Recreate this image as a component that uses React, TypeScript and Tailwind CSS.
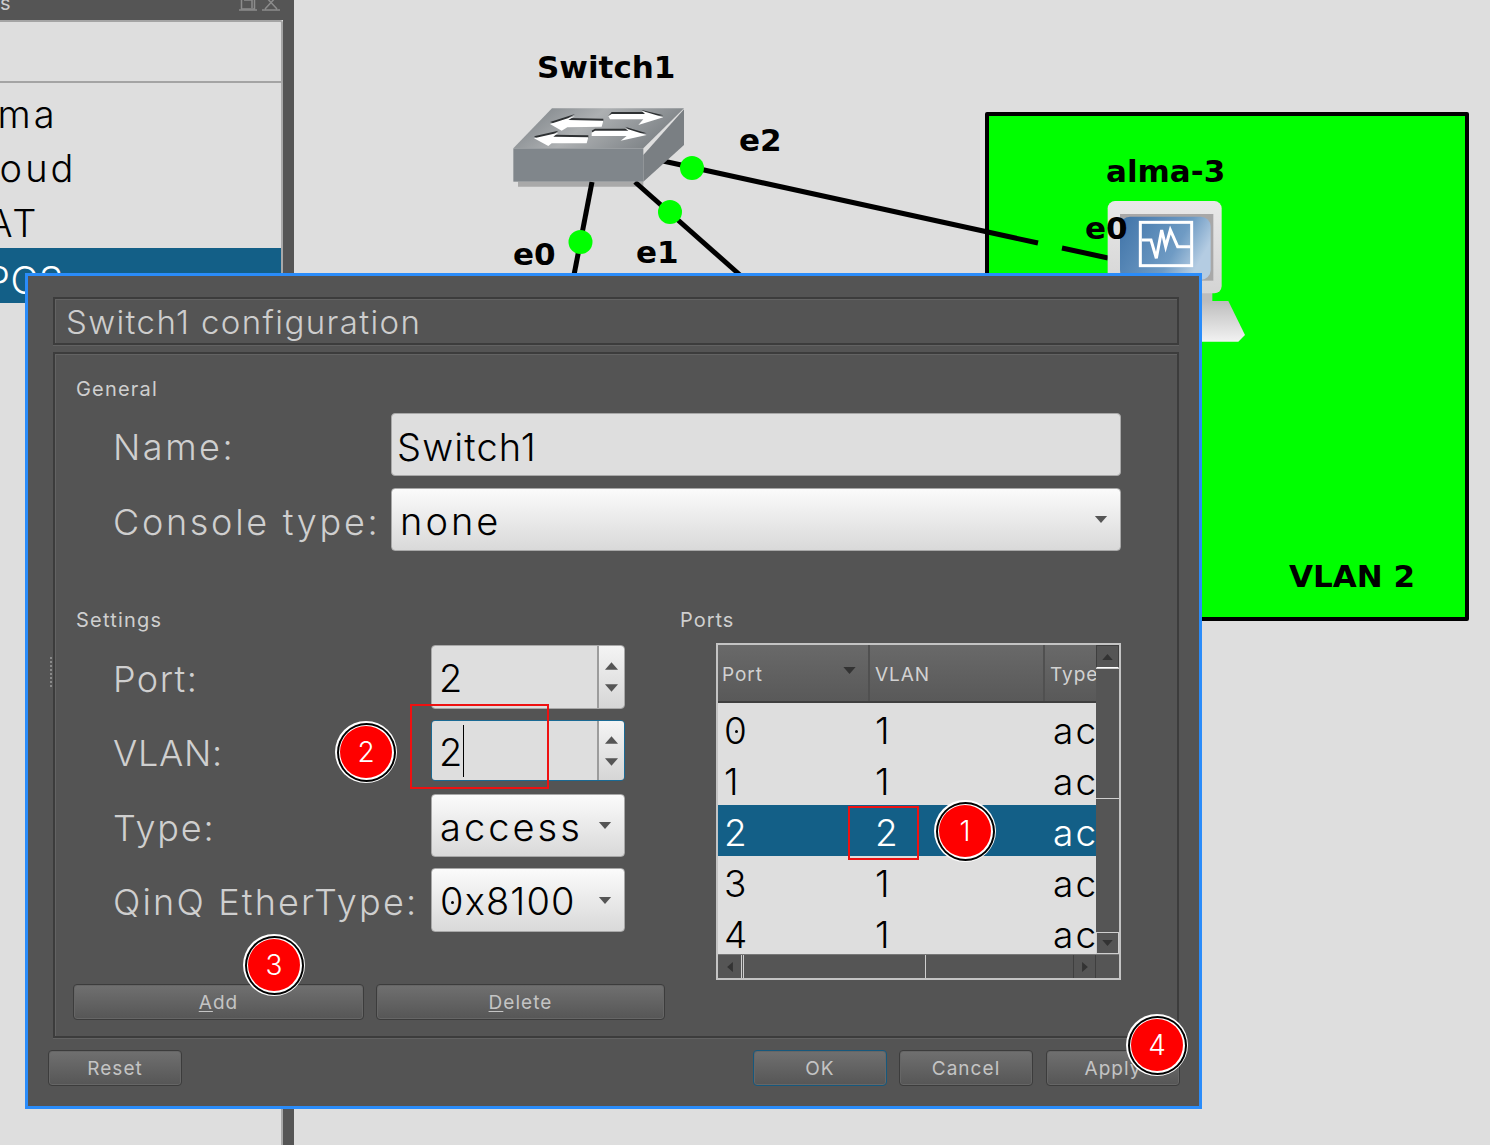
import React from "react";

const Tri = ({ dir, className }: { dir: "up" | "down" | "left" | "right"; className: string }) => {
  const pts = { up: "0,8 7,0 14,8", down: "0,0 14,0 7,8", left: "8,0 8,14 0,7", right: "0,0 0,14 8,7" }[dir];
  const vb = dir === "up" || dir === "down" ? "0 0 14 8" : "0 0 8 14";
  return (
    <svg viewBox={vb} className={className}>
      <polygon points={pts} fill="currentColor" />
    </svg>
  );
};

const Badge = ({ n, className }: { n: string; className: string }) => (
  <div className={`absolute z-30 w-[62px] h-[62px] rounded-full bg-white flex items-center justify-center ${className}`}>
    <div className="w-[59px] h-[59px] rounded-full bg-black flex items-center justify-center">
      <div className="w-[55px] h-[55px] rounded-full bg-white flex items-center justify-center">
        <div className="w-[52px] h-[52px] rounded-full bg-[#ff0000] flex items-center justify-center text-white text-[28px] font-light tracking-normal">
          {n}
        </div>
      </div>
    </div>
  </div>
);

const Field = ({ label, w = "w-[277px]", tr = "tracking-[0.07em]" }: { label: string; w?: string; tr?: string }) => (
  <div className={`${w} shrink-0 pt-[4px] -ml-[1px] mr-[1px] text-[36px] font-light ${tr} text-[#cfcfcf] leading-none whitespace-nowrap`}>
    {label}
  </div>
);

const Btn = ({ children, className = "" }: { children: React.ReactNode; className?: string }) => (
  <div
    className={`h-[36px] pt-[2px] rounded-[4px] border border-[#3c3c3c] bg-gradient-to-b from-[#707070] to-[#565656] shadow-[inset_0_0_0_1px_#666] flex items-center justify-center text-[19px] tracking-[0.055em] text-[#c4c4c4] ${className}`}
  >
    {children}
  </div>
);

const Spin = ({ value, focus, h }: { value: string; focus?: boolean; h: string }) => (
  <div
    className={`w-[194px] ${h} rounded-[4px] border flex overflow-hidden ${focus ? "border-[#1a6a94]" : "border-[#a8a8a8]"}`}
  >
    <div className="flex-1 bg-[#dedede] text-black text-[38px] font-light pl-[7px] flex items-center pt-[2px] border-r-2 border-[#9c9c9c] leading-none">
      {value}
      {focus && <span className="w-px h-[52px] bg-black ml-px -mt-[2px]" />}
    </div>
    <div className="w-[25px] bg-gradient-to-b from-[#f4f4f4] to-[#d6d6d6] flex flex-col items-center justify-center gap-[14px] text-[#555]">
      <Tri dir="up" className="w-[13px] h-[8px]" />
      <Tri dir="down" className="w-[13px] h-[8px]" />
    </div>
  </div>
);

const Combo = ({ children, h, width }: { children: React.ReactNode; h: string; width: string }) => (
  <div
    className={`${width} ${h} rounded-[4px] border border-[#a8a8a8] bg-gradient-to-b from-[#fbfbfb] to-[#d9d9d9] flex items-center justify-between pl-[8px] pr-[12px] text-black text-[38px] font-light tracking-[0.08em] leading-none`}
  >
    <span className="pt-[2px]">{children}</span>
    <Tri dir="down" className="w-[14px] h-[7px] text-[#555]" />
  </div>
);

const Zero = () => (
  <span className="relative inline-block">
    0
    <span className="absolute left-[11px] top-1/2 w-[3px] h-[3px] rounded-full bg-current" />
  </span>
);

const rows: [React.ReactNode, string][] = [
  [<Zero />, "1"],
  ["1", "1"],
  ["2", "2"],
  ["3", "1"],
  ["4", "1"],
];

const sunken = "border-2 border-[#3c3c3c] shadow-[inset_1px_1px_0_#636363,0_1px_0_#626262]";

export default function App() {
  return (
    <div className="relative w-[1490px] h-[1145px] overflow-hidden bg-[#dedede] font-['Inter','Liberation_Sans',sans-serif]">
      {/* Left dock */}
      <div className="absolute left-0 top-0 w-[294px] h-[1145px] flex">
        <div className="w-[283px] flex flex-col">
          <div className="h-[20px] bg-[#555] flex items-start justify-between pr-[3px] overflow-hidden shrink-0">
            <span className="text-[#ccc] text-[20px] leading-none -mt-[7px] tracking-wide">s</span>
            <div className="flex gap-[5px] -mt-[5px] text-[#8c8c8c]">
              <svg viewBox="0 0 18 17" className="w-[18px] h-[17px]" fill="none" stroke="currentColor" strokeWidth="1.5">
                <rect x="2.5" y="1" width="13" height="13" />
                <path d="M0 15h18M5 5h8v8" />
              </svg>
              <svg viewBox="0 0 18 17" className="w-[18px] h-[17px]" fill="none" stroke="currentColor" strokeWidth="1.5">
                <path d="M3 1l12 13M15 1L3 14M0 15h18" />
              </svg>
            </div>
          </div>
          <div className="h-[63px] bg-[#dedede] border-r-2 border-t-2 border-b-2 border-[#a4a4a4] rounded-tr-[3px] shrink-0" />
          <div className="h-[220px] bg-[#dedede] border-r-2 border-[#a8a8a8] text-black text-[38px] font-light tracking-[0.08em] leading-none overflow-hidden">
            <div className="h-[54px] flex items-center -ml-[43px] pt-[8px] whitespace-nowrap">Alma</div>
            <div className="h-[54px] flex items-center -ml-[43px] pt-[8px] whitespace-nowrap">Cloud</div>
            <div className="h-[54px] flex items-center -ml-[45px] pt-[10px] whitespace-nowrap">NAT</div>
            <div className="h-[55px] mt-[3px] flex items-center -ml-[15px] bg-[#135f87] text-white pl-[1px] pt-[8px] tracking-[0.02em] whitespace-nowrap">PCS</div>
          </div>
          <div className="flex-1 border-r-2 border-[#a8a8a8]" />
        </div>
        <div className="w-[11px] bg-[#555]" />
      </div>

      {/* Canvas */}
      <div className="absolute left-[985px] top-[112px] w-[484px] h-[509px] bg-[#00ff00] border-[4px] border-black rounded-[2px]" />
      <svg className="absolute left-0 top-0" width="1490" height="1145" viewBox="0 0 1490 1145">
        <defs>
          <linearGradient id="top" x1="0" y1="0" x2="1" y2="0.3">
            <stop offset="0" stopColor="#767c81" />
            <stop offset="0.5" stopColor="#adb0b2" />
            <stop offset="1" stopColor="#7e8387" />
          </linearGradient>
          <linearGradient id="screen" x1="0" y1="0" x2="1" y2="0.4">
            <stop offset="0" stopColor="#3f73a8" />
            <stop offset="0.7" stopColor="#6f9bc4" />
            <stop offset="1" stopColor="#b4cce2" />
          </linearGradient>
          <linearGradient id="base" x1="0" y1="0" x2="0" y2="1">
            <stop offset="0" stopColor="#bdbdbd" />
            <stop offset="1" stopColor="#f2f2f2" />
          </linearGradient>
          <linearGradient id="mon" x1="0" y1="0" x2="0" y2="1">
            <stop offset="0" stopColor="#e8e8e8" />
            <stop offset="1" stopColor="#d4d4d4" />
          </linearGradient>
        </defs>
        <polygon transform="translate(490 30) scale(0.33333)" points="84,455 460,455 460,470 84,470" fill="#a9a9a9" />
        <g stroke="#000" strokeWidth="5" fill="none">
          <path d="M592 182L574 275" />
          <path d="M635 182L740 275" />
          <path d="M663 161L1038 243" />
          <path d="M1062 248L1108 258" />
        </g>
        <g transform="translate(490 30) scale(0.33333)">
          <polygon points="460,375 582,238 582,345 460,455" fill="#7a7f83" />
          <polygon points="70,355 186,235 582,235 460,355" fill="url(#top)" />
          <rect x="70" y="355" width="390" height="100" fill="#80868b" />
          <g fill="#2e3133">
            <polygon points="180,276 255,252 235,264 340,266 340,274 190,280" />
            <polygon points="355,258 365,246 465,246 455,240 520,256 460,262" />
            <polygon points="132,319 205,302 190,314 295,316 295,324 140,324" />
            <polygon points="305,302 315,296 415,296 405,290 470,310 310,312" />
          </g>
          <g fill="#fff">
            <polygon points="180,282 255,258 235,270 340,272 335,290 232,292 215,302" />
            <polygon points="355,258 365,252 465,252 455,242 520,262 445,285 460,268 360,268" />
            <polygon points="132,325 205,308 190,320 295,322 290,340 185,340 175,348" />
            <polygon points="305,308 315,302 415,302 405,295 470,315 392,332 410,318 305,318" />
          </g>
        </g>
        <circle cx="692" cy="168" r="12" fill="#00ff00" />
        <circle cx="670" cy="212" r="12" fill="#00ff00" />
        <circle cx="580.5" cy="242" r="12" fill="#00ff00" />
        <g transform="translate(980 100) scale(0.33333)">
          <rect x="665" y="575" width="32" height="35" fill="#bdbdbd" />
          <polygon points="600,603 745,603 795,705 775,725 600,725" fill="url(#base)" />
          <rect x="383" y="303" width="342" height="277" rx="22" fill="url(#mon)" />
          <rect x="420" y="342" width="280" height="200" fill="#a8a8a8" />
          <rect x="420" y="350" width="272" height="190" rx="30" fill="url(#screen)" />
          <rect x="481" y="367" width="154" height="130" fill="none" stroke="#fff" strokeWidth="9" />
          <path d="M485 420h28l16 55 16-85 12 50 14-50 22 50h38" fill="none" stroke="#fff" strokeWidth="9" />
        </g>
      </svg>
      <div className="absolute left-0 top-0 text-black font-bold font-['DejaVu_Sans',sans-serif] text-[31px] leading-none">
        <span className="absolute left-[537px] top-[52px]">Switch1</span>
        <span className="absolute left-[739px] top-[125px]">e2</span>
        <span className="absolute left-[513px] top-[239px]">e0</span>
        <span className="absolute left-[636px] top-[237px]">e1</span>
        <span className="absolute left-[1106px] top-[156px] whitespace-nowrap">alma-3</span>
        <span className="absolute left-[1085px] top-[213px]">e0</span>
        <span className="absolute left-[1289px] top-[561px] whitespace-nowrap">VLAN 2</span>
      </div>

      {/* Dialog */}
      <div className="absolute left-[25px] top-[273px] w-[1177px] h-[836px] border-[3px] border-[#2a8cfa] bg-[#545454] pl-[20px] pr-[20px] pt-[21px] flex flex-col">
        <div className={`ml-[5px] h-[48px] shrink-0 ${sunken} flex items-center pl-[11px] pt-[4px] text-[33px] font-light tracking-[0.042em] text-[#cdcdcd] whitespace-nowrap`}>
          Switch1 configuration
        </div>
        <div className={`ml-[5px] mt-[7px] h-[686px] shrink-0 ${sunken} pl-[21px] pt-[22px] text-[#cfcfcf]`}>
          <div className="h-[24px] pt-[2px] flex items-center text-[20px] tracking-[0.06em]">General</div>
          <div className="ml-[38px] mt-[13px] flex flex-col gap-[12px]">
            <div className="flex items-center">
              <Field label="Name:" />
              <div className="w-[730px] h-[63px] rounded-[4px] border border-[#a8a8a8] bg-[#dedede] flex items-center pl-[5px] pt-[4px] text-black text-[38px] font-light tracking-[0.03em] leading-none">
                Switch1
              </div>
            </div>
            <div className="flex items-center">
              <Field label="Console type:" tr="tracking-[0.075em]" />
              <Combo h="h-[63px]" width="w-[730px]">none</Combo>
            </div>
          </div>
          <div className="mt-[56px] flex gap-[15px]">
            <div className="w-[589px] shrink-0">
              <div className="h-[24px] pt-[2px] flex items-center text-[20px] tracking-[0.06em]">Settings</div>
              <div className="ml-[38px] mt-[14px] flex flex-col">
                <div className="flex items-center">
                  <Field label="Port:" w="w-[317px]" tr="tracking-[0.04em]" />
                  <Spin value="2" h="h-[64px]" />
                </div>
                <div className="flex items-center mt-[11px]">
                  <Field label="VLAN:" w="w-[317px]" tr="tracking-[0.02em]" />
                  <Spin value="2" focus h="h-[61px]" />
                </div>
                <div className="flex items-center mt-[13px]">
                  <Field label="Type:" w="w-[317px]" tr="tracking-[0.05em]" />
                  <Combo h="h-[63px]" width="w-[194px]">access</Combo>
                </div>
                <div className="flex items-center mt-[11px]">
                  <Field label="QinQ EtherType:" w="w-[317px]" tr="tracking-[0.06em]" />
                  <Combo h="h-[64px]" width="w-[194px]">
                    <span className="tracking-[0.03em]">
                      <Zero />x8100
                    </span>
                  </Combo>
                </div>
              </div>
              <div className="-ml-[3px] mt-[52px] flex gap-[12px]">
                <Btn className="w-[291px]">
                  <span><u className="underline-offset-2">A</u>dd</span>
                </Btn>
                <Btn className="w-[289px]">
                  <span><u className="underline-offset-2">D</u>elete</span>
                </Btn>
              </div>
            </div>
            <div>
              <div className="h-[24px] pt-[2px] flex items-center text-[20px] tracking-[0.05em]">Ports</div>
              <div className="ml-[36px] mt-[12px] w-[405px] h-[337px] border-2 border-[#c4c4c4] flex flex-col bg-[#555]">
                <div className="flex h-[309px]">
                  <div className="w-[378px] flex flex-col overflow-hidden">
                    <div className="h-[58px] shrink-0 flex bg-gradient-to-b from-[#696969] to-[#595959] border-b-2 border-[#3f3f3f] text-[19px] text-[#d2d2d2] tracking-[0.05em]">
                      <div className="w-[152px] shrink-0 flex items-center justify-between pl-[4px] pr-[12px] pt-[4px] border-r-2 border-[#505050]">
                        <span>Port</span>
                        <Tri dir="down" className="w-[13px] h-[7px] -mt-[9px] text-[#333]" />
                      </div>
                      <div className="w-[175px] shrink-0 flex items-center pl-[5px] pt-[4px] border-r-2 border-[#505050]">VLAN</div>
                      <div className="flex-1 flex items-center pl-[5px] pt-[4px] whitespace-nowrap">Type</div>
                    </div>
                    <div className="flex-1 bg-[#dedede] text-[37px] font-light text-black leading-none overflow-hidden">
                      {rows.map(([p, v], i) => (
                        <div
                          key={i}
                          className={`h-[51px] pt-[3px] flex items-center ${i === 2 ? "bg-[#135f87] text-white" : ""}`}
                        >
                          <div className="w-[157px] shrink-0 pl-[6px]">{p}</div>
                          <div className="w-[178px] shrink-0">{v}</div>
                          <div className="tracking-[0.06em]">access</div>
                        </div>
                      ))}
                    </div>
                  </div>
                  <div className="flex-1 bg-[#555] flex flex-col">
                    <div className="h-[23px] border border-[#3f3f3f] border-b-white flex items-center justify-center text-[#333]">
                      <Tri dir="up" className="w-[11px] h-[6px]" />
                    </div>
                    <div className="h-[131px] border-y border-[#cfcfcf]" />
                    <div className="flex-1" />
                    <div className="h-[22px] border border-[#cfcfcf] flex items-center justify-center text-[#333]">
                      <Tri dir="down" className="w-[11px] h-[6px]" />
                    </div>
                  </div>
                </div>
                <div className="flex-1 flex border-t border-[#777] items-stretch pr-[23px]">
                  <div className="w-[24px] border-r border-[#cfcfcf] flex items-center justify-center text-[#333]">
                    <Tri dir="left" className="w-[6px] h-[10px]" />
                  </div>
                  <div className="ml-[1px] w-[183px] border-x border-[#cfcfcf]" />
                  <div className="flex-1" />
                  <div className="w-[23px] border-x border-[#3f3f3f] flex items-center justify-center text-[#333]">
                    <Tri dir="right" className="w-[6px] h-[10px]" />
                  </div>
                </div>
              </div>
            </div>
          </div>
        </div>
        <div className="mt-[12px] -mr-[1px] flex items-center">
          <Btn className="w-[134px]">Reset</Btn>
          <div className="flex-1" />
          <Btn className="w-[134px] mr-[12px] border-[#15587d] from-[#66737c] to-[#505b62]">OK</Btn>
          <Btn className="w-[134px] mr-[13px]">Cancel</Btn>
          <Btn className="w-[134px]">Apply</Btn>
        </div>
        <div className="absolute left-[22px] top-[381px] w-[2px] h-[30px] border-l-2 border-dotted border-[#8a8a8a]" />
      </div>

      {/* Annotations */}
      <div className="absolute left-[410px] top-[704px] w-[139px] h-[85px] border-2 border-[#ee1111] z-20" />
      <div className="absolute left-[848px] top-[806px] w-[71px] h-[54px] border-2 border-[#ee1111] z-20" />
      <Badge n="1" className="left-[934px] top-[800px]" />
      <Badge n="2" className="left-[335px] top-[721px]" />
      <Badge n="3" className="left-[243px] top-[934px]" />
      <Badge n="4" className="left-[1126px] top-[1014px]" />
    </div>
  );
}
